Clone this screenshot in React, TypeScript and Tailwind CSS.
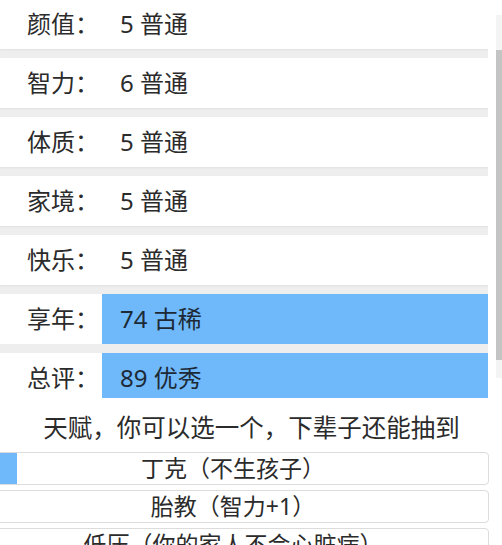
const stats = [
  { label: "颜值：", value: "5 普通" },
  { label: "智力：", value: "6 普通" },
  { label: "体质：", value: "5 普通" },
  { label: "家境：", value: "5 普通" },
  { label: "快乐：", value: "5 普通" },
  { label: "享年：", value: "74 古稀", hi: true },
  { label: "总评：", value: "89 优秀", hi: true },
];

const talents = ["丁克（不生孩子）", "胎教（智力+1）", "低压（你的家人不会心脏病）"];

const font = "font-['Noto_Sans','Noto_Sans_CJK_SC',sans-serif]";

export default function App() {
  return (
    <div className={`w-[502px] h-[545px] overflow-hidden bg-white text-[#2b2b2b] ${font}`}>
      {/* Summary list */}
      <div className="flex h-[398px]">
        <div className="w-[488px] overflow-hidden bg-[#eeeeee] flex flex-col gap-[9px] -mt-[1px]">
          {stats.map((s) => (
            <div
              key={s.label}
              className={`flex h-[50px] shrink-0 items-stretch ${s.hi ? "bg-white" : "bg-white shadow-[0_1px_2px_rgba(0,0,0,0.06)]"}`}
            >
              <div className="w-[102px] shrink-0 pl-[27px] flex items-center text-[24px] leading-none">
                {s.label}
              </div>
              <div
                className={`flex-1 flex items-center pl-[18px] text-[24px] leading-none ${s.hi ? "bg-[#6fb9fb] text-[#1d2a36]" : ""}`}
              >
                {s.value}
              </div>
            </div>
          ))}
        </div>
        <div className="w-[8px] bg-white" />
        <div className="w-[6px] flex flex-col pt-[15px] pb-[20px]">
          <div className="flex-1 bg-[#f4f4f4] flex flex-col pt-[35px] pb-[18px]">
            <div className="flex-1 bg-[#c4c4c4]" />
          </div>
        </div>
      </div>

      {/* Talents */}
      <div className="flex flex-col">
        <div className="text-center text-[24.5px] leading-[24px] pt-[18px] pb-[12px] pl-[1px]">
          天赋，你可以选一个，下辈子还能抽到
        </div>
        <div className="flex flex-col gap-[5px] -ml-[23px] w-[512px]">
          {talents.map((t, i) => (
            <div
              key={t}
              className={`h-[33px] shrink-0 rounded-[4px] border border-[#dcdcdc] flex items-center justify-center text-[23px] leading-none ${i === 0 ? "bg-[linear-gradient(to_right,#6fb9fb_39px,#ffffff_39px)]" : "bg-white"}`}
            >
              {t}
            </div>
          ))}
        </div>
      </div>
    </div>
  );
}
